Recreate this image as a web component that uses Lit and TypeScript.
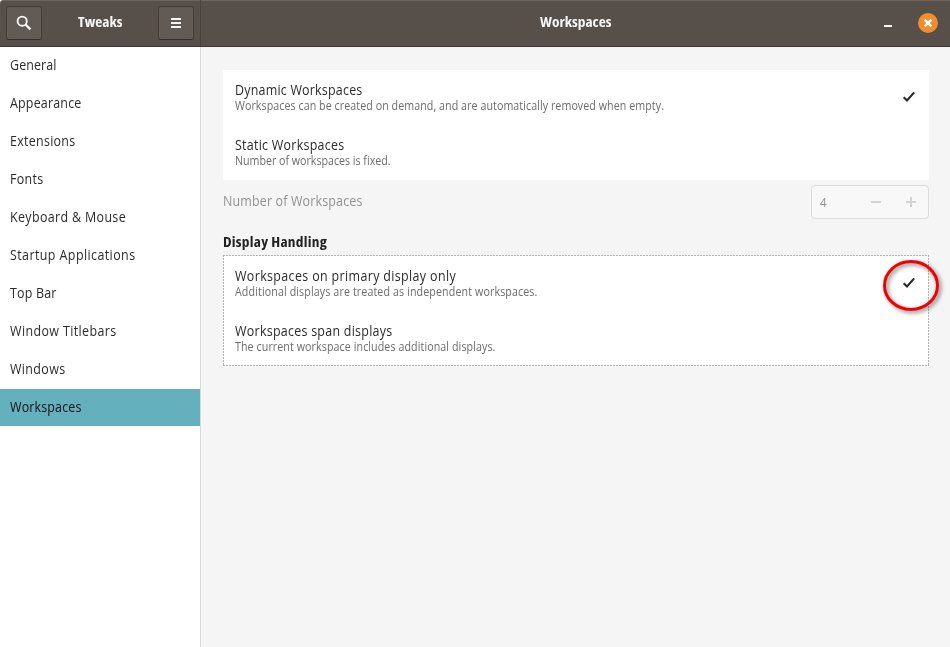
import { LitElement, html, css, svg } from "lit";
import { customElement, property, query } from "lit/decorators.js";

/** A label drawn at a horizontal scale, and tracked so that it occupies a given width. */
@customElement("fit-label")
class FitLabel extends LitElement {
  @property() text = "";
  @property({ type: Number }) width = 0;
  @property({ type: Number }) scale = 0.89;
  @query("span") span!: HTMLSpanElement;

  static styles = css`
    :host { display: block; white-space: pre; }
    span { display: inline-block; transform-origin: 0 50%; }
  `;

  updated() {
    const s = this.span.style;
    s.transform = "none";
    s.letterSpacing = "0px";
    const natural = this.span.getBoundingClientRect().width;
    s.letterSpacing = `${(this.width / this.scale - natural) / this.text.length}px`;
    s.transform = `scaleX(${this.scale})`;
    this.style.width = `${this.width}px`;
  }

  render() {
    return html`<span>${this.text}</span>`;
  }
}

interface Option {
  title: string;
  titleWidth: number;
  note: string;
  noteWidth: number;
  checked: boolean;
}

const sections: [string, number][] = [
  ["General", 46.5],
  ["Appearance", 71.5],
  ["Extensions", 65.5],
  ["Fonts", 33.5],
  ["Keyboard & Mouse", 116],
  ["Startup Applications", 125.5],
  ["Top Bar", 46.5],
  ["Window Titlebars", 106.5],
  ["Windows", 55.5],
  ["Workspaces", 71.5],
];

const creation: Option[] = [
  { title: "Dynamic Workspaces", titleWidth: 127.5, note: "Workspaces can be created on demand, and are automatically removed when empty.", noteWidth: 429, checked: true },
  { title: "Static Workspaces", titleWidth: 109.5, note: "Number of workspaces is fixed.", noteWidth: 155.5, checked: false },
];

const displays: Option[] = [
  { title: "Workspaces on primary display only", titleWidth: 221, note: "Additional displays are treated as independent workspaces.", noteWidth: 302.5, checked: true },
  { title: "Workspaces span displays", titleWidth: 157.5, note: "The current workspace includes additional displays.", noteWidth: 260.5, checked: false },
];

const check = svg`<path d="M1.7 7.2 5 10.4 12.2 2.4" fill="none" stroke="#272727" stroke-width="2.1"/>`;

@customElement("app-root")
class AppRoot extends LitElement {
  static styles = css`
    :host {
      display: flex;
      flex-direction: column;
      width: 950px;
      height: 647px;
      overflow: hidden;
      box-sizing: border-box;
      position: relative;
      background: #f5f5f5;
      color: #2b2b2b;
      font: 14px/20px "Open Sans", "Noto Sans", sans-serif;
    }
    * { box-sizing: border-box; }
    svg { display: block; }
    header {
      display: flex;
      flex: none;
      height: 47px;
      background: #574f4a;
      border-bottom: 1px solid #403734;
      box-shadow: inset 0 1px #6d6560;
      border-radius: 4px 0 0 0;
      color: #f7f6f5;
      font-weight: 700;
      font-stretch: 75%;
    }
    .side-bar {
      display: flex;
      align-items: center;
      justify-content: space-between;
      width: 201px;
      padding: 0 6px;
      border-right: 1px solid #49413d;
    }
    .main-bar {
      flex: 1;
      display: grid;
      grid-template-columns: 1fr auto 1fr;
      align-items: center;
      padding: 0 12px 2px 0;
    }
    .main-bar fit-label { grid-column: 2; margin-left: 13px; }
    .side-bar fit-label { margin-bottom: 2px; }
    .tool {
      width: 36px;
      height: 34px;
      border: 1px solid #453e3a;
      border-bottom-color: #352e2b;
      border-radius: 3px;
      background: #625a54;
      display: grid;
      place-items: center;
    }
    .controls { display: flex; justify-content: flex-end; align-items: center; gap: 26px; }
    .close { width: 20px; height: 20px; margin-top: 1px; }
    .controls svg:first-child { margin-top: 1px; }
    .body { flex: 1; display: flex; min-height: 0; }
    nav {
      width: 201px;
      flex: none;
      background: #fff;
      border-right: 1px solid #d9d9d9;
      display: flex;
      flex-direction: column;
      gap: 1px;
    }
    .section { height: 37px; padding: 8px 10px; }
    .section.active { background: #65b0bd; color: #111; }
    main { flex: 1; padding: 23px 21px 0 22px; }
    .list { background: #fff; height: 110px; }
    .list.focused {
      height: 111px;
      padding-top: 1px;
      background:
        repeating-linear-gradient(90deg, #b4b4b4 0 2px, #f2f2f2 2px 3px) top / 100% 1px no-repeat,
        repeating-linear-gradient(90deg, #b4b4b4 0 2px, #f2f2f2 2px 3px) bottom / 100% 1px no-repeat,
        repeating-linear-gradient(#b4b4b4 0 2px, #f2f2f2 2px 3px) left / 1px 100% no-repeat,
        repeating-linear-gradient(#b4b4b4 0 2px, #f2f2f2 2px 3px) right / 1px 100% no-repeat,
        #fff;
    }
    .option { display: flex; justify-content: space-between; height: 55px; padding: 11px 13px 0 12px; }
    .option svg { margin-top: 9px; }
    .title { line-height: 18px; }
    .note { font-size: 12px; line-height: 14px; color: #6c6c6c; }
    .count { display: flex; justify-content: space-between; margin-top: 5px; color: #929292; }
    .count > fit-label { margin-top: 6px; }
    .spin {
      display: flex;
      align-items: center;
      width: 118px;
      height: 34px;
      padding: 0 11px 0 8px;
      border: 1px solid #dcdcdc;
      border-radius: 4px;
      background: #f8f8f8;
      font-size: 13px;
    }
    .spin .minus { margin-left: auto; margin-right: 23px; }
    h2 { margin: 13px 0 3px; font-size: 14px; line-height: 20px; font-weight: 700; font-stretch: 75%; color: #222; }
    .marker { position: absolute; left: 876px; top: 252px; filter: drop-shadow(2px 2px 2px rgba(0, 0, 0, 0.5)); }
  `;

  private list(options: Option[], kind = "") {
    return html`<div class="list ${kind}">
      ${options.map(
        (o) => html`<div class="option">
          <div>
            <fit-label class="title" .text=${o.title} .width=${o.titleWidth}></fit-label>
            <fit-label class="note" .text=${o.note} .width=${o.noteWidth}></fit-label>
          </div>
          ${o.checked ? html`<svg width="14" height="14">${check}</svg>` : ""}
        </div>`
      )}
    </div>`;
  }

  render() {
    return html`
      <header>
        <div class="side-bar">
          <div class="tool">
            <svg width="16" height="16" fill="none" stroke="#f7f6f5">
              <circle cx="6.2" cy="6.2" r="4.6" stroke-width="1.9" />
              <path d="M9.5 9.5 14.4 14.4" stroke-width="2.4" />
            </svg>
          </div>
          <fit-label .text=${"Tweaks"} .width=${44.5} .scale=${1.1}></fit-label>
          <div class="tool">
            <svg width="10" height="10" fill="#f7f6f5"><path d="M0 0h10v2H0zM0 4h10v2H0zM0 8h10v2H0z" /></svg>
          </div>
        </div>
        <div class="main-bar">
          <fit-label .text=${"Workspaces"} .width=${71.5} .scale=${1.1}></fit-label>
          <div class="controls">
            <svg width="8" height="8"><path d="M0 6h8v2H0z" fill="#f7f6f5" /></svg>
            <svg class="close" viewBox="0 0 20 20">
              <circle cx="10" cy="10" r="10" fill="#f28c2c" />
              <path d="M6.6 6.6 13.4 13.4M13.4 6.6 6.6 13.4" stroke="#fff" stroke-width="2.2" />
            </svg>
          </div>
        </div>
      </header>
      <div class="body">
        <nav>
          ${sections.map(
            ([name, width]) => html`<div class="section ${name === "Workspaces" ? "active" : ""}">
              <fit-label .text=${name} .width=${width}></fit-label>
            </div>`
          )}
        </nav>
        <main>
          ${this.list(creation)}
          <div class="count">
            <fit-label .text=${"Number of Workspaces"} .width=${139.5}></fit-label>
            <div class="spin">
              <fit-label .text=${"4"} .width=${7}></fit-label>
              <svg class="minus" width="12" height="12"><path d="M1 5h10v2H1z" fill="#d2d2d2" /></svg>
              <svg width="12" height="12"><path d="M1 5h4V1h2v4h4v2H7v4H5V7H1z" fill="#d2d2d2" /></svg>
            </div>
          </div>
          <h2><fit-label .text=${"Display Handling"} .width=${104} .scale=${1.1}></fit-label></h2>
          ${this.list(displays, "focused")}
        </main>
      </div>
      <svg class="marker" width="74" height="70">
        <ellipse cx="35" cy="33.5" rx="26.5" ry="24" fill="none" stroke="#f40000" stroke-width="3" />
      </svg>
    `;
  }
}
